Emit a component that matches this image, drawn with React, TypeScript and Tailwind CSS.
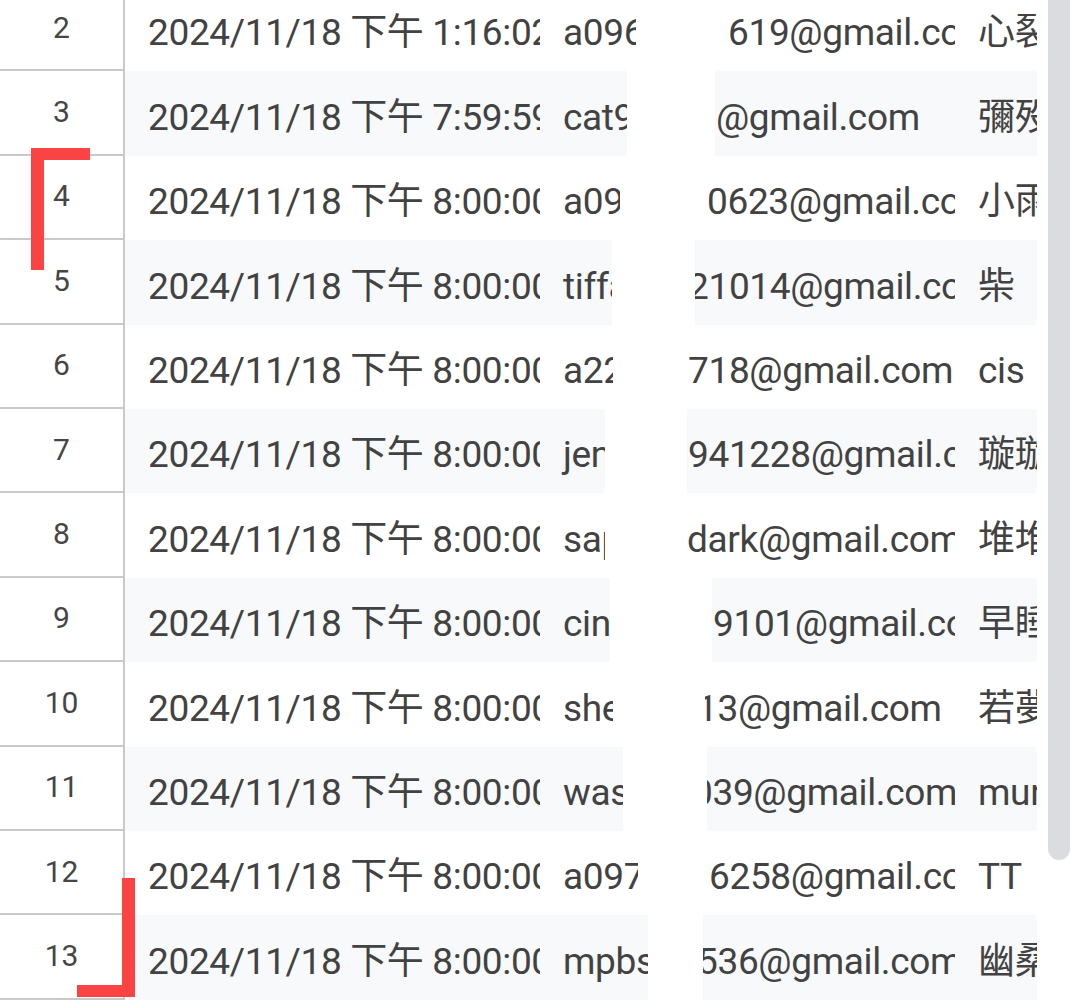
import React from 'react'

type Row = {
  n: number
  time: string
  user: string
  leftW: string
  gapW: string
  shift: string
  mail: string
  name: string
}

// redacted email column: left fragment, white marker gap, right fragment
const ROWS: Row[] = [
  { n: 2, time: '2024/11/18 下午 1:16:02', user: 'a096', leftW: 'w-[96px]', gapW: 'w-[79px]', shift: 'ml-[13px]', mail: '619@gmail.com', name: '心裂' },
  { n: 3, time: '2024/11/18 下午 7:59:59', user: 'cat9', leftW: 'w-[87px]', gapW: 'w-[88px]', shift: 'ml-[1px]', mail: '@gmail.com', name: '彌殁' },
  { n: 4, time: '2024/11/18 下午 8:00:00', user: 'a09', leftW: 'w-[80px]', gapW: 'w-[80px]', shift: 'ml-[7px]', mail: '0623@gmail.com', name: '小雨' },
  { n: 5, time: '2024/11/18 下午 8:00:00', user: 'tiffa', leftW: 'w-[72px]', gapW: 'w-[83px]', shift: '-ml-[7px]', mail: '21014@gmail.com', name: '柴' },
  { n: 6, time: '2024/11/18 下午 8:00:00', user: 'a22', leftW: 'w-[73px]', gapW: 'w-[75px]', shift: 'ml-[0px]', mail: '718@gmail.com', name: 'cis' },
  { n: 7, time: '2024/11/18 下午 8:00:00', user: 'jen', leftW: 'w-[65px]', gapW: 'w-[82px]', shift: 'ml-[1px]', mail: '941228@gmail.com', name: '璇璇' },
  { n: 8, time: '2024/11/18 下午 8:00:00', user: 'sap', leftW: 'w-[65px]', gapW: 'w-[82px]', shift: 'ml-[0px]', mail: 'dark@gmail.com', name: '堆堆' },
  { n: 9, time: '2024/11/18 下午 8:00:00', user: 'cin', leftW: 'w-[70px]', gapW: 'w-[102px]', shift: 'ml-[1px]', mail: '9101@gmail.com', name: '早睡' },
  { n: 10, time: '2024/11/18 下午 8:00:00', user: 'she', leftW: 'w-[73px]', gapW: 'w-[92px]', shift: '-ml-[8px]', mail: '13@gmail.com', name: '若夢' },
  { n: 11, time: '2024/11/18 下午 8:00:00', user: 'was', leftW: 'w-[83px]', gapW: 'w-[84px]', shift: '-ml-[15px]', mail: '039@gmail.com', name: 'mur' },
  { n: 12, time: '2024/11/18 下午 8:00:00', user: 'a097', leftW: 'w-[98px]', gapW: 'w-[68px]', shift: 'ml-[3px]', mail: '6258@gmail.com', name: 'TT' },
  { n: 13, time: '2024/11/18 下午 8:00:00', user: 'mpbs', leftW: 'w-[108px]', gapW: 'w-[55px]', shift: '-ml-[6px]', mail: '536@gmail.com', name: '幽桑' },
]

const cellText = 'flex items-end pb-[20px] leading-none whitespace-nowrap overflow-hidden tracking-[-0.35px]'

function SheetRow({ row, banded }: { row: Row; banded: boolean }) {
  const bg = banded ? 'bg-[#f8f9fa]' : 'bg-white'
  return (
    <div className="flex h-[84.4px]">
      <div className="w-[125px] shrink-0 flex items-center justify-center border-r-2 border-b-2 border-[#c9c9c9] bg-white text-[30px] text-[#454545] pb-[2px]">
        {row.n}
      </div>
      <div className={`w-[415px] shrink-0 pl-[23px] ${cellText} ${bg}`}>{row.time}</div>
      <div className="w-[415px] shrink-0 flex">
        <div className={`${row.leftW} shrink-0 pl-[23px] ${cellText} ${bg}`}>{row.user}</div>
        <div className={`${row.gapW} shrink-0 bg-white`} />
        <div className={`flex-1 min-w-0 ${cellText} ${bg}`}>
          <span className={row.shift}>{row.mail}</span>
        </div>
      </div>
      <div className={`w-[82px] shrink-0 pl-[23px] ${cellText} ${bg}`}>{row.name}</div>
    </div>
  )
}

export default function App() {
  return (
    <div
      className="relative w-[1080px] h-[1000px] overflow-hidden bg-white text-[37px] text-[#424242]"
      style={{ fontFamily: 'Roboto, "Noto Sans CJK TC", sans-serif' }}
    >
      <div className="-mt-[13px] flex flex-col">
        {ROWS.map((row, i) => (
          <SheetRow key={row.n} row={row} banded={i % 2 === 1} />
        ))}
      </div>

      {/* scrollbar */}
      <div className="absolute right-[10px] -top-[20px] w-[22px] h-[880px] rounded-full bg-[#dadce0]" />

      {/* red selection brackets */}
      <div className="absolute left-[31px] top-[148px] w-[13px] h-[122px] bg-[#fa4343]" />
      <div className="absolute left-[31px] top-[148px] w-[59px] h-[12px] bg-[#fa4343]" />
      <div className="absolute left-[122px] top-[878px] w-[13px] h-[119px] bg-[#fa4343]" />
      <div className="absolute left-[77px] top-[985px] w-[58px] h-[12px] bg-[#fa4343]" />
    </div>
  )
}
